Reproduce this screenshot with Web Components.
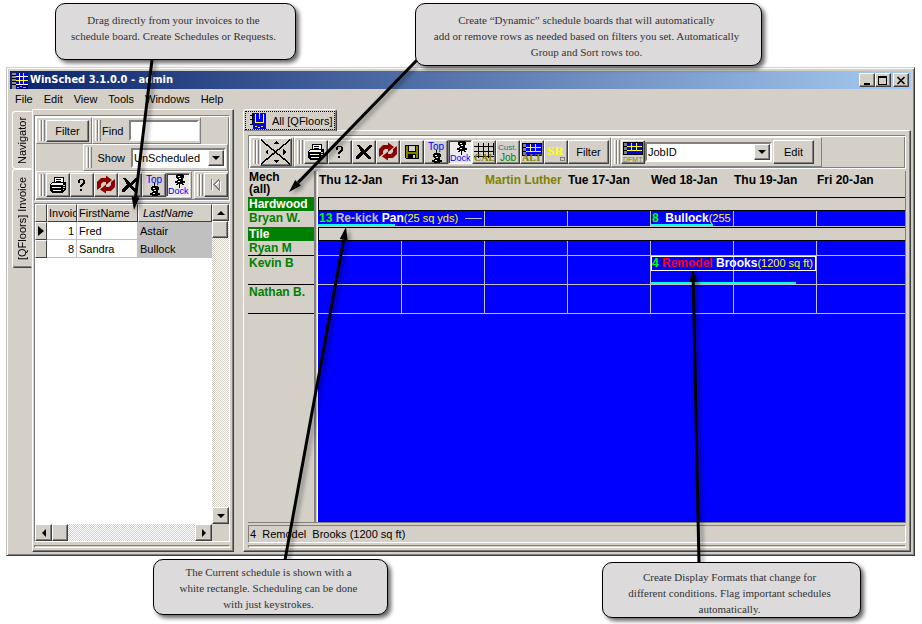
<!DOCTYPE html>
<html lang="en">
<head>
<meta charset="utf-8">
<title>WinSched 3.1.0.0 - admin</title>
<style>
html,body{margin:0;height:100%}
body{background:#fff;font:11px/14px "Liberation Sans",Arial,sans-serif;color:#000;overflow:hidden;
--face:#d4d0c8;--dark:#808080;--black:#404040}
</style>
</head>
<body>
<sched-app></sched-app>
<script>
const define=(name,css,html,setup)=>{
  const t=document.createElement('template');
  t.innerHTML=`<style>*{box-sizing:border-box}button,input,select{font:inherit;color:inherit;margin:0;border-radius:0}${css}</style>${html}`;
  customElements.define(name,class extends HTMLElement{
    constructor(){super();this.attachShadow({mode:'open'}).append(t.content.cloneNode(true))}
    connectedCallback(){if(setup)setup(this,this.shadowRoot)}
  });
};
const raised='border:1px solid;border-color:#fff var(--black) var(--black) #fff;box-shadow:inset -1px -1px var(--dark);background:var(--face);';
const sunken='border:1px solid;border-color:var(--dark) #fff #fff var(--dark);';

/* ---------- icons ---------- */
const cells=(x,y)=>`<path d="M${x} ${y}h20v13h-20z" fill="#000"/><path d="M${x+1} ${y+1}h3v11h-3z" fill="#808080"/><path d="M${x+1} ${y+4.5}h3M${x+1} ${y+8.5}h3" stroke="#000"/><path d="M${x+4} ${y+1}h15v11h-15z" fill="#00f"/><path d="M${x+4} ${y+4.5}h15M${x+4} ${y+8.5}h15M${x+8.5} ${y+1}v8M${x+13.5} ${y+1}v8" stroke="#ff0"/>`;
const pin=(x,y)=>`<g transform="translate(${x} ${y})"><path d="M2 0h5l2 2v2l-2 1 1 1v1h2v2h-2l1 2h-2v-1h-4v1h-2l1-2h-2v-2h2v-1l1-1-2-1v-2z" fill="#000"/><path d="M3 2h2v1h-2zM4 4h2v1h-2zM3 7h2v1h-2z" fill="#fff"/></g>`;
const ICONS={
 print:[20,20,'<path d="M7 2h9l-1 6h-9z" fill="#fff" stroke="#000"/><path d="M8 4.500h5M8 6.500h5" stroke="#000"/><path d="M2 9l3-2h13v7l-3 4h-11l-2-3z" fill="#000"/><path d="M4 8h11v2h-12zM4 12h9v1h-9zM5 15h8v1h-8z" fill="#fff"/><path d="M11 12h2v1h-2z" fill="#ff0"/><path d="M15 10.500h2M15 12.500h2M15 14.500h1" stroke="#d4d0c8"/>'],
 help:[20,20,'<path d="M6 5h1v-1h5v1h1v4h-1v1h-1v1h-1v1h-2v-2h1v-1h1v-1h1v-3h-3v3h-2zM8 14h2v2h-2z" fill="#000"/>'],
 x:[20,20,'<path d="M3 3h3l4 5 5-5h3v2l-6 5 5 6v1h-3l-5-5-4 5h-3v-2l5-5.500z" fill="#000"/>'],
 refresh:[20,20,'<g fill="#8b0000" shape-rendering="auto"><path d="M1 15V7l4-4h5V0.500l6 4.500-6 5V7H7L5 9v3zM19 4v8l-4 4h-5v2.500L4 14.500l6-5V12h3l2-2V7z"/></g>'],
 top:[22,22,`<text x="3" y="9" font-size="10" fill="#00f">Top</text>${pin(7,12)}<path d="M11.500 9v4" stroke="#000"/>`],
 dock:[22,22,`${pin(8,0)}<path d="M12.500 10v4" stroke="#000"/><text x="1" y="20" font-size="9" fill="#00f">Dock</text>`],
 first:[20,20,'<path d="M5.500 4v11M13 4.500l-5 5 5 5v-10" stroke="#fff" fill="none" transform="translate(1 1)"/><path d="M5.500 4v11M13 4.500l-5 5 5 5v-10" stroke="#808080" fill="none"/>'],
 save:[20,20,'<path d="M3 3h14v14h-13l-1-1z" fill="#000"/><path d="M4 4h2v6h8v-6h2v7h-12z" fill="#808000"/><path d="M7 4h6v5h-6z" fill="#d4d0c8"/><path d="M4 11h12v5h-2v-4h-8v4h-2z" fill="#808000"/><path d="M11 13h2v3h-2z" fill="#d4d0c8"/>'],
 cal:[22,22,'<path d="M1 5.500h20M1 10.500h20M1 15.500h20M5.500 2v15M10.500 2v15M15.500 2v15M20.500 2v12" stroke="#000"/><text x="1" y="20" font-size="10" font-weight="bold" fill="#808000" font-family="Liberation Serif">CAL</text>'],
 cust:[22,22,'<text x="1" y="9" font-size="8" fill="#008080">Cust.</text><text x="3" y="20" font-size="10" fill="#008000">Job</text>'],
 alt:[22,22,`${cells(1,2)}<text x="1" y="20" font-size="10" font-weight="bold" fill="#808000" font-family="Liberation Serif">ALT</text>`],
 sr:[22,22,'<text x="2" y="14" font-size="13" font-weight="bold" fill="#ff0" font-family="Liberation Serif">SR</text><path d="M15.500 16.500h4v3h-4z" fill="none" stroke="#808080"/>'],
 dfmt:[22,22,`${cells(1,1)}<text x="1" y="21" font-size="7" fill="#808000">DFMT</text>`],
 compass:[30,26,'<path d="M0 1L29 25M29 1L0 25" stroke="#000" stroke-width="1.500"/><path d="M12 5h6l-3-3zM12 21h6l-3 3zM7 10v6l-3-3zM22 10v6l3-3z" fill="#000"/>'],
 app:[16,16,'<path d="M0 0h16v16H0z" fill="#00f"/><path d="M0 0h4v16H0z" fill="#909090"/><path d="M0 2.500h4M0 5.500h4M0 8.500h4M0 11.500h4" stroke="#000"/><path d="M4 3.500h12M4 7.500h12M4 11.500h12M7.500 0v12M11.500 0v12" stroke="#fff" /><path d="M4 7.500h12M11.500 0v12" stroke="#ff0"/><path d="M4 12h12v4H4z" fill="#008"/><path d="M5 14.500h2M8 13.500h2M11 14.500h3" stroke="#99f"/>'],
 board:[16,16,'<path d="M3 0h13v16H3z" fill="#00f"/><path d="M0 2.500h4M0 6.500h4M0 11.500h4M2.500 0v12" stroke="#000"/><path d="M5.500 1v9M13.500 1v9" stroke="#fff" fill="none"/><path d="M9.500 0v6M6 9.500h8" stroke="#ff0"/><path d="M5 13.500h2M8 14.500h2M11 13.500h2" stroke="#ff0"/>'],
};
define('ui-icon',':host{display:block;flex:none}svg{display:block;font-family:"Liberation Sans",Arial,sans-serif}','<svg aria-hidden="true" shape-rendering="crispEdges"></svg>',(el,r)=>{
  const [w,h,s]=ICONS[el.getAttribute('name')],v=r.querySelector('svg');
  v.setAttribute('width',w);v.setAttribute('height',h);v.setAttribute('viewBox',`0 0 ${w} ${h}`);v.innerHTML=s;
});

/* ---------- controls ---------- */
define('push-button',`:host{display:block;height:24px}button{${raised}height:100%;width:100%;padding:0;display:flex;align-items:center;justify-content:center}`,
 '<button type="button"><slot></slot></button>');
define('tool-button',`:host{display:block;flex:none;width:24px;height:24px}:host([wide]){width:32px;height:28px}button{${raised}display:flex;align-items:center;justify-content:center;width:100%;height:100%;padding:0;overflow:hidden}
 :host([pressed]) button{border-color:var(--dark) #fff #fff var(--dark);box-shadow:inset 1px 1px var(--black);background:#ecebe7}`,
 '<button type="button"></button>',(el,r)=>{
  const i=document.createElement('ui-icon');i.setAttribute('name',el.getAttribute('icon'));
  const b=r.querySelector('button');b.replaceChildren(i);b.setAttribute('aria-label',el.getAttribute('label'));
 });
define('text-field',`:host{display:flex;align-items:center;gap:6px}input{width:70px;height:21px;border:2px solid;border-color:var(--dark) #fff #fff var(--dark);background:#fff;outline:0;padding:0 2px}`,
 '<label for="f"><slot></slot></label><input id="f" type="text">');
define('combo-box',`:host{display:flex;align-items:center;gap:6px}label:empty{display:none}span{display:grid;width:var(--w,95px);height:20px}
 select,i{grid-area:1/1}select{appearance:none;border:2px solid;border-color:var(--dark) #fff #fff var(--dark);background:#fff;padding:0 16px 0 1px;outline:0;height:20px;width:100%}
 i{justify-self:end;align-self:center;width:16px;height:16px;margin-right:2px;pointer-events:none;${raised}display:grid;place-items:center}
 i::before{content:"";border:4px solid transparent;border-top-color:#000;border-bottom:0}`,
 '<label for="s"></label><span><select id="s"><option></option></select><i></i></span>',(el,r)=>{
  r.querySelector('label').textContent=el.getAttribute('label')||'';
  r.querySelector('select').setAttribute('aria-label',el.getAttribute('name'));
  r.querySelector('option').textContent=el.getAttribute('value');
 });
define('tool-band',`:host{display:flex;align-items:center;flex:none;height:100%;border:1px solid;border-color:#fff var(--dark) var(--dark) #fff;padding:0 1px 0 2px}
 .g{align-self:stretch;margin:2px 0;width:7px;flex:none;background:linear-gradient(90deg,#fff 0 1px,var(--face) 1px 2px,var(--dark) 2px 3px,#fff 3px 4px,var(--face) 4px 5px,var(--dark) 5px 6px,transparent 6px)}`,
 '<div class="g"></div><slot></slot>');
define('tool-frame',`:host{display:block;flex:none;border:1px solid;border-color:var(--dark) #fff #fff var(--dark);box-shadow:inset 1px 1px #fff,inset -1px -1px var(--dark);padding:1px}`,'<slot></slot>');
define('scroll-bar',`:host{display:flex;flex:none;background:repeating-conic-gradient(#fff 0 25%,var(--face) 0 50%) 0 0/2px 2px}
 :host([vertical]){flex-direction:column;width:17px}:host(:not([vertical])){height:17px}
 button{${raised}width:17px;height:17px;padding:0;flex:none;display:grid;place-items:center}
 .t{${raised}width:16px;height:17px}.s{flex:1}
 svg{display:block}:host(:not([vertical])) svg{transform:rotate(-90deg)}`,
 `<button type="button" aria-label="Back"><svg width="8" height="8"><path d="M0 6h8L4 2z"/></svg></button><div class="t"></div><div class="s"></div><button type="button" aria-label="Forward"><svg width="8" height="8"><path d="M0 2h8L4 6z"/></svg></button>`);

/* ---------- window chrome ---------- */
define('title-bar',`:host{display:flex;flex:none;height:18px;align-items:center;padding:0 2px;background:linear-gradient(90deg,#0a246a,#a6caf0);color:#fff}
 h1{margin:0 auto 0 2px;font:bold 11px/18px "DejaVu Sans Condensed","DejaVu Sans",sans-serif}
 button{${raised}width:16px;height:14px;padding:0;display:grid;place-items:center}button:last-child{margin-left:2px}ui-icon{margin-top:1px}`,
 `<ui-icon name="app"></ui-icon><h1>WinSched 3.1.0.0 - admin</h1>
 <button type="button" aria-label="Minimize"><svg width="10" height="9" shape-rendering="crispEdges"><path d="M2 7h6v2H2z"/></svg></button>
 <button type="button" aria-label="Maximize"><svg width="10" height="9" shape-rendering="crispEdges"><path d="M0 0h9v9H0zM1 2v6h7V2z" fill-rule="evenodd"/></svg></button>
 <button type="button" aria-label="Close"><svg width="10" height="9"><path d="M1.500 1l7 7M8.500 1l-7 7" stroke="#000" stroke-width="1.600"/></svg></button>`);
define('menu-bar',`:host{display:flex;flex:none;height:20px;align-items:center;padding-left:5px;gap:11px}button{border:0;background:none;padding:0}`,
 ['File','Edit','View','Tools','Windows','Help'].map(t=>`<button type="button">${t}</button>`).join(''));
define('side-tabs',`:host{display:flex;flex:none;flex-direction:column;width:22px;padding:2px 0 0 2px}
 button{writing-mode:vertical-rl;border:1px solid;border-color:#fff transparent var(--black) #fff;border-radius:3px 0 0 3px;background:var(--face);padding:0 2px;flex:none}
 span{transform:rotate(180deg);display:block}.a{height:58px}.b{height:99px;border-bottom-color:var(--black);box-shadow:inset 0 -1px var(--dark)}.a{border-bottom-color:#fff}`,
 '<button class="a" type="button"><span>Navigator</span></button><button class="b" type="button"><span>[QFloors] Invoice</span></button>');
define('groove-line',`:host{display:block;flex:none;height:3px;border:1px solid;border-color:var(--dark) #fff #fff var(--dark)}`,'');

/* ---------- invoice panel ---------- */
define('invoice-grid',`:host{display:flex;flex-direction:column;flex:1;min-height:0;border:1px solid;border-color:var(--dark) #fff #fff var(--dark);box-shadow:inset 1px 1px var(--black)}
 .m{display:flex;flex:1;min-height:0;background:#fff}.l{flex:1;min-width:0}
 table{border-collapse:separate;border-spacing:0;table-layout:fixed;width:100%}
 th,td{height:18px;padding:0 2px;text-align:left;font-weight:normal;overflow:hidden;white-space:nowrap;line-height:16px}
 thead th{background:var(--face);padding:0 1px}th{background:var(--face);border:1px solid;border-color:#fff var(--black) var(--black) #fff}
 tbody th{padding:0}td{border-right:1px solid #c0c0c0;border-bottom:1px solid #c0c0c0}
 td:nth-child(2){text-align:right}td:last-child{background:#c0c0c0}thead th:last-child{padding-left:4px}
 svg{display:block;margin-left:2px}.f{display:flex;flex:none}.f scroll-bar{flex:1}.c{width:17px;background:var(--face)}`,
 `<div class="m"><div class="l"><table><colgroup><col style="width:12px"><col style="width:30px"><col style="width:61px"><col></colgroup>
 <thead><tr><th></th><th>Invoice</th><th>FirstName</th><th><i>LastName</i></th></tr></thead>
 <tbody><tr><th><svg width="6" height="12"><path d="M0 1v10l6-5z"/></svg></th><td>1</td><td>Fred</td><td>Astair</td></tr>
 <tr><th></th><td>8</td><td>Sandra</td><td>Bullock</td></tr></tbody></table></div><scroll-bar vertical></scroll-bar></div>
 <div class="f"><scroll-bar></scroll-bar><div class="c"></div></div>`);
define('invoice-panel',`:host{display:flex;flex-direction:column;flex:none;width:202px;padding:5px 3px 3px 1px;${raised}}
 .r{display:flex;height:27px}.r.last{height:28px;overflow:hidden}.end{justify-content:flex-end}invoice-grid{margin:2px 0 3px}
 .pad{margin-left:4px}push-button{width:43px;height:22px;margin-right:1px}.g2{margin-left:2px}`,
 `<tool-frame>
 <div class="r"><tool-band><push-button>Filter</push-button></tool-band><tool-band><text-field>Find</text-field></tool-band></div>
 <div class="r end"><tool-band><combo-box class="pad" label="Show" name="Show" value="UnScheduled"></combo-box></tool-band></div>
 <div class="r last"><tool-band><tool-button icon="print" label="Print"></tool-button><tool-button icon="help" label="Help"></tool-button><tool-button icon="refresh" label="Refresh"></tool-button><tool-button icon="x" label="Delete"></tool-button><tool-button icon="top" label="On top"></tool-button><tool-button icon="dock" label="Dock" pressed></tool-button></tool-band><tool-band class="g2"><tool-button icon="first" label="First"></tool-button></tool-band></div>
 </tool-frame><invoice-grid></invoice-grid><groove-line></groove-line>`);

/* ---------- schedule board ---------- */
define('sched-event',`:host{display:flex;position:relative;z-index:1;height:15px;font:bold 12px/14px "Liberation Sans",Arial,sans-serif;color:#fff;white-space:pre;overflow:hidden;padding-left:1px}
 :host([current]){width:165px;border:1px solid #fff;height:15px;line-height:13px;margin-left:0;padding:0}
 .n{color:#0f0}.k{color:var(--kind,#fff)}.q{color:#ff0;font-weight:normal;font-size:11px}hr{width:17px;margin:7px 0 0 7px;border:0;border-top:1px solid #c0c0c0;height:0;flex:none}
 .bar{position:absolute;left:0;bottom:0;height:2px;background:#0ff;width:var(--done,0)}`,
 '<span class="n"></span><span class="k"></span><span><slot></slot></span><span class="q"></span><div class="bar"></div>',(el,r)=>{
  r.querySelector('.n').textContent=el.getAttribute('no')+' ';
  r.querySelector('.k').textContent=(el.getAttribute('kind')||'')+' ';
  r.querySelector('.q').textContent=el.getAttribute('qty');
  if(el.hasAttribute('continued'))r.querySelector('.q').after(document.createElement('hr'));
 });
define('schedule-board',`:host{display:block;flex:1;min-height:0;border-right:1px solid var(--dark);border-bottom:1px solid var(--dark)}
 table{width:100%;height:100%;border-collapse:separate;border-spacing:0;table-layout:fixed}
 th,td{padding:0;text-align:left;vertical-align:top;white-space:nowrap}
 thead th{font:bold 12px/12px "Liberation Sans",Arial,sans-serif;height:26px;padding-left:1px;padding-top:3px}
 thead th:first-child{padding-top:0}
 tbody th{font:bold 12px/14px "Liberation Sans",Arial,sans-serif;color:#008000;padding-left:1px;border-bottom:1px solid transparent}
 .s{border-left:2px solid var(--dark);border-right:1px solid #fff;padding:0}
 .g{height:14px}.g th{background:#008000;color:#fff;line-height:14px;border:0}.g .b{border:1px solid #000;border-right:0}
 .d td:not(.s){background:#00f;border-bottom:1px solid #c0c0c0}.d td:nth-child(n+4){border-left:1px solid #c0c0c0}
 .h1{height:15px}.h16{height:16px}.h2{height:29px}.ln th{border-bottom-color:#000}.hol{color:#808000}
 .d.fill td:not(.s){border:0}.bar{height:2px;width:145px;margin-top:11px;background:#0ff;position:relative}
 .fill th{border:0}`,
 `<table><colgroup><col style="width:66px"><col style="width:4px"><col style="width:83px"><col style="width:83px"><col style="width:83px"><col style="width:83px"><col style="width:83px"><col style="width:83px"><col></colgroup>
 <thead><tr style="height:26px"><th>Mech<br>(all)</th><td class="s"></td><th class="dd">Thu 12-Jan</th><th>Fri 13-Jan</th><th class="hol">Martin Luther</th><th>Tue 17-Jan</th><th>Wed 18-Jan</th><th>Thu 19-Jan</th><th>Fri 20-Jan</th></tr></thead>
 <tbody>
 <tr class="g"><th>Hardwood</th><td class="s"></td><td class="b" colspan="7"></td></tr>
 <tr class="d h16"><th>Bryan W.</th><td class="s"></td><td colspan="2"><sched-event no="13" kind="Re-kick" qty="(25 sq yds)" continued style="--kind:#c0c0c0;--done:77px">Pan</sched-event></td><td></td><td></td><td><sched-event no="8" qty="(255" style="--done:62px">Bullock</sched-event></td><td></td><td></td></tr>
 <tr class="g"><th>Tile</th><td class="s"></td><td class="b" colspan="7"></td></tr>
 <tr class="d h1 ln"><th>Ryan M</th><td class="s"></td><td></td><td></td><td></td><td></td><td></td><td></td><td></td></tr>
 <tr class="d h2 ln"><th>Kevin B</th><td class="s"></td><td></td><td></td><td></td><td></td><td><sched-event current no="4" kind="Remodel" qty="(1200 sq ft)" style="--kind:#f00">Brooks</sched-event><div class="bar"></div></td><td></td><td></td></tr>
 <tr class="d h2 ln"><th>Nathan B.</th><td class="s"></td><td></td><td></td><td></td><td></td><td></td><td></td><td></td></tr>
 <tr class="d fill"><th></th><td class="s"></td><td colspan="7"></td></tr>
 </tbody></table>`);
define('status-line',`:host{display:block;flex:none;height:18px;${sunken}padding:0 1px;line-height:16px;white-space:pre}`,'<slot></slot>');
define('board-panel',`:host{display:flex;flex-direction:column;flex:1;min-width:0;margin-left:9px}
 .tab{${raised}align-self:flex-start;height:22px;width:94px;border-bottom:0;border-radius:3px 3px 0 0;padding:1px;flex:none;position:relative;margin-bottom:-1px}
 .tab span{display:flex;align-items:center;gap:6px;border:1px dotted #000;height:100%;width:100%;padding-left:4px;white-space:nowrap}
 .page{display:flex;flex-direction:column;flex:1;min-height:0;padding:4px 4px 3px 4px;${raised}}
 .r{display:flex;height:30px}schedule-board{margin:2px 0 2px}status-line{margin-bottom:2px}
 push-button{width:41px;height:24px}combo-box{--w:127px}.ed{margin:0 6px 0 1px}`,
 `<button class="tab" type="button"><span><ui-icon name="board"></ui-icon>All [QFloors]</span></button>
 <div class="page"><tool-frame><div class="r">
 <tool-band><tool-button wide icon="compass" label="Move"></tool-button></tool-band>
 <tool-band><tool-button icon="print" label="Print"></tool-button><tool-button icon="help" label="Help"></tool-button><tool-button icon="x" label="Delete"></tool-button><tool-button icon="refresh" label="Refresh"></tool-button><tool-button icon="save" label="Save"></tool-button><tool-button icon="top" label="On top"></tool-button><tool-button icon="dock" label="Dock" pressed></tool-button><tool-button icon="cal" label="Calendar"></tool-button><tool-button icon="cust" label="Customer job"></tool-button><tool-button icon="alt" label="Alternate"></tool-button><tool-button icon="sr" label="Requests"></tool-button><push-button>Filter</push-button></tool-band>
 <tool-band><tool-button icon="dfmt" label="Display format"></tool-button><combo-box name="Display format" value="JobID"></combo-box><push-button class="ed">Edit</push-button></tool-band>
 </div></tool-frame><schedule-board></schedule-board><status-line>4  Remodel  Brooks (1200 sq ft)</status-line><groove-line></groove-line></div>`);

/* ---------- annotations ---------- */
define('call-out',`:host{display:block;position:absolute;box-sizing:border-box;background:#dcdadb;border:1px solid #000;border-radius:10px;box-shadow:3px 3px 4px #0009;
 font:11px/16px "Liberation Serif",serif;color:#333;text-align:center;padding:8px 8px 0 4px;white-space:nowrap}`,'<slot></slot>');
define('arrow-layer',`:host{display:block;position:absolute;inset:0;pointer-events:none}svg{display:block;width:100%;height:100%;filter:drop-shadow(3px 2px 2px #0006)}`,
 '<svg aria-hidden="true"></svg>',(el,r)=>{
  r.querySelector('svg').innerHTML=[[152,60,134,210],[417,60,289,192],[285,560,346,227],[699,563,693,269]].map(([a,b,c,d])=>{
   const L=Math.hypot(c-a,d-b),u=(c-a)/L,v=(d-b)/L,x=c-u*13,y=d-v*13;
   return `<path d="M${a} ${b}L${x} ${y}" stroke="#000" stroke-width="3"/><path d="M${c} ${d}L${x-v*4} ${y+u*4}L${x+v*4} ${y-u*4}z"/>`}).join('');
 });

define('sched-app',`:host{display:flex;position:relative;height:100vh;padding:67px 7px 68px 6px;box-sizing:border-box}
 main{flex:1;min-width:0;display:flex;flex-direction:column;background:var(--face);padding:3px;border:1px solid;border-color:var(--face) var(--black) var(--black) #c0c0c0;box-shadow:inset 1px 1px #fff,inset -1px -1px var(--dark)}
 .body{display:flex;flex:1;min-height:0}`,
 `<main><title-bar></title-bar><menu-bar></menu-bar><div class="body"><side-tabs></side-tabs><invoice-panel></invoice-panel><board-panel></board-panel></div></main>
 <arrow-layer></arrow-layer>
 <call-out style="left:55px;top:3px;width:241px;height:57px">Drag directly from your invoices to the<br>schedule board. Create Schedules or Requests.</call-out>
 <call-out style="left:415px;top:3px;width:347px;height:63px">Create “Dynamic” schedule boards that will automatically<br>add or remove rows as needed based on filters you set. Automatically<br>Group and Sort rows too.</call-out>
 <call-out style="left:153px;top:559px;width:235px;height:56px;padding-top:4px">The Current schedule is shown with a<br>white rectangle. Scheduling can be done<br>with just keystrokes.</call-out>
 <call-out style="left:602px;top:562px;width:259px;height:56px;padding-top:6px">Create Display Formats that change for<br>different conditions. Flag important schedules<br>automatically.</call-out>`);
</script>
</body>
</html>
